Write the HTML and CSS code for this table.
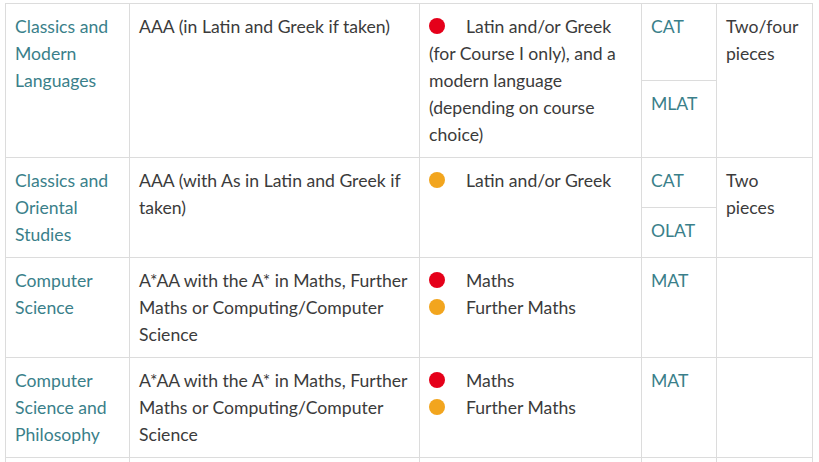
FILE: index.html
```html
<!DOCTYPE html>
<html lang="en">
<head>
<meta charset="utf-8">
<title>Subject requirements</title>
<link rel="stylesheet" href="styles.css">
</head>
<body>
<table class="req">
  <colgroup>
    <col class="c1"><col class="c2"><col class="c3"><col class="c4"><col class="c5">
  </colgroup>
  <tbody>
    <tr class="h77">
      <td rowspan="2"><a class="lnk" href="#">Classics and Modern Languages</a></td>
      <td rowspan="2">AAA (in Latin and Greek if taken)</td>
      <td rowspan="2"><span class="dot red"></span>Latin and/or Greek (for Course I only), and a modern language (depending on course choice)</td>
      <td><a class="lnk" href="#">CAT</a></td>
      <td rowspan="2">Two/four pieces</td>
    </tr>
    <tr class="h77">
      <td><a class="lnk" href="#">MLAT</a></td>
    </tr>
    <tr class="h50">
      <td rowspan="2"><a class="lnk" href="#">Classics and Oriental Studies</a></td>
      <td rowspan="2">AAA (with As in Latin and Greek if taken)</td>
      <td rowspan="2"><span class="dot amber"></span>Latin and/or Greek</td>
      <td><a class="lnk" href="#">CAT</a></td>
      <td rowspan="2">Two pieces</td>
    </tr>
    <tr class="h50">
      <td><a class="lnk" href="#">OLAT</a></td>
    </tr>
    <tr class="h100">
      <td><a class="lnk" href="#">Computer Science</a></td>
      <td>A*AA with the A* in Maths, Further Maths or Computing/Computer Science</td>
      <td>
        <div class="item"><span class="dot red"></span>Maths</div>
        <div class="item"><span class="dot amber"></span>Further Maths</div>
      </td>
      <td><a class="lnk" href="#">MAT</a></td>
      <td></td>
    </tr>
    <tr class="h100">
      <td><a class="lnk" href="#">Computer Science and Philosophy</a></td>
      <td>A*AA with the A* in Maths, Further Maths or Computing/Computer Science</td>
      <td>
        <div class="item"><span class="dot red"></span>Maths</div>
        <div class="item"><span class="dot amber"></span>Further Maths</div>
      </td>
      <td><a class="lnk" href="#">MAT</a></td>
      <td></td>
    </tr>
    <tr class="h40">
      <td></td><td></td><td></td><td></td><td></td>
    </tr>
  </tbody>
</table>
</body>
</html>
```

FILE: styles.css
```css
html, body {
  margin: 0;
  padding: 0;
  background: #ffffff;
}

body {
  padding: 3px 0 0 5px;
  font-family: Lato, "Open Sans", sans-serif;
  font-size: 17.6px;
  line-height: 27px;
  color: #3b3b3b;
}

.req {
  border-collapse: collapse;
  table-layout: fixed;
  width: 807px;
}

.c1 { width: 124px; }
.c2 { width: 290px; }
.c3 { width: 222px; }
.c4 { width: 75px; }
.c5 { width: 96px; }

.req td {
  border: 1px solid #dcdcdc;
  padding: 9px 9px 9px 9px;
  vertical-align: top;
}

.h77 { height: 76px; }
.h50 { height: 49px; }
.h100 { height: 99px; }
.h40 { height: 40px; }

.lnk {
  color: #3a7f8a;
  text-decoration: none;
}

.dot {
  display: inline-block;
  width: 16px;
  height: 16px;
  border-radius: 50%;
  margin-right: 21px;
  vertical-align: -1px;
}

.red { background: #e5001a; }
.amber { background: #f2a51e; }
```
